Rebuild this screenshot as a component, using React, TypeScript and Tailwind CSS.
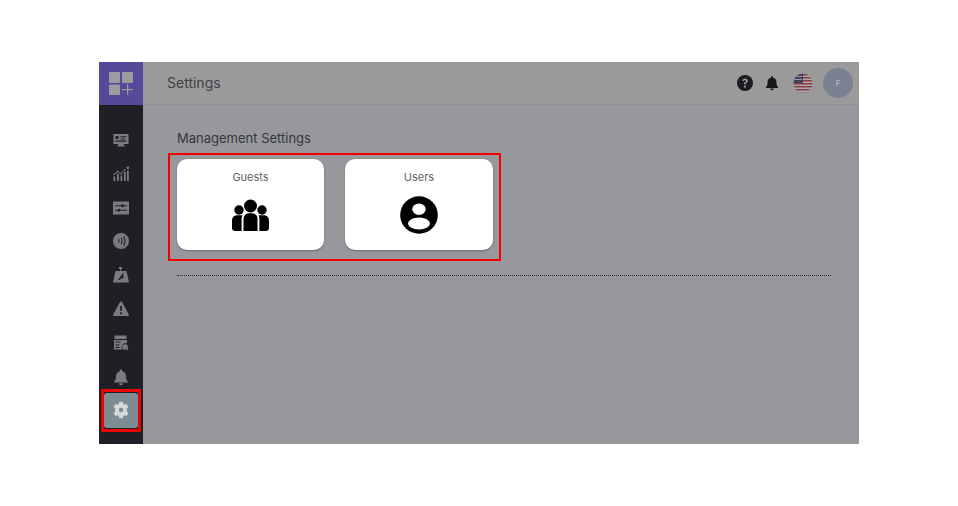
import React from "react";

const Ic = ({ children, w = 18, h = 18 }: { children: React.ReactNode; w?: number; h?: number }) => (
  <svg width={w} height={h} viewBox="0 0 18 18" fill="currentColor">{children}</svg>
);

const BellPath = () => (
  <path d="M9 1.500c-.7 0-1.200.5-1.200 1.200v.5C5.400 3.800 4 5.800 4 8.200c0 3.400-.8 4.300-1.800 5.400-.3.400-.1.900.4.900h12.800c.5 0 .7-.5.400-.9-1-1.100-1.800-2-1.800-5.400 0-2.400-1.400-4.400-3.800-5v-.5c0-.7-.5-1.200-1.200-1.200zM7 15.300a2 2 0 0 0 4 0z" />
);

const GearPath = () => (
  <path fillRule="evenodd" d="M7.200.8h3.600l.4 2.200c.5.200.9.400 1.300.7l2.100-.8 1.800 3.100-1.700 1.400a6 6 0 0 1 0 3.200l1.700 1.400-1.800 3.100-2.100-.8c-.4.300-.8.500-1.300.7l-.4 2.200H7.200l-.4-2.200c-.5-.2-.9-.4-1.300-.7l-2.100.8-1.800-3.100 1.700-1.400a6 6 0 0 1 0-3.200L1.600 6l1.800-3.100 2.100.8c.4-.3.8-.5 1.300-.7zM9 6.800a2.200 2.200 0 1 0 0 4.400 2.200 2.200 0 0 0 0-4.400z" />
);

const navIcons: React.ReactNode[] = [
  <Ic key="a">
    <path fillRule="evenodd" d="M1.500 3h15v10h-5l1.500 2.500H5L6.500 13h-5zM3.500 5v3h3V5zm5 .3v1h6v-1zm0 2.200v1h4.500v-1zM3.500 9.500v1.200h11V9.500z" />
  </Ic>,
  <Ic key="b">
    <path d="M1.500 16v-4.500h1.800V16zM5 16V8.500h1.800V16zM8.500 16v-5.500h1.800V16zM12 16V7h1.800v9zM15 16V5.500h1.800V16z" />
    <path d="M1 9.800 5.600 5.500l3.500 3 3.500-4.500 1.400.8-.5.800-.7-.4-3.500 4.500-3.600-3-4 3.800z" />
    <circle cx="15.800" cy="2.800" r="1.400" />
  </Ic>,
  <Ic key="c">
    <path fillRule="evenodd" d="M1 2.500h16v13H1zM3 6.200v1h6.200a1.500 1.500 0 0 0 2.800 0H15v-1h-3a1.500 1.500 0 0 0-2.800 0zM3 10.800v1h2.500a1.500 1.500 0 0 0 2.800 0H15v-1H8.300a1.500 1.500 0 0 0-2.800 0z" />
  </Ic>,
  <Ic key="d">
    <path fillRule="evenodd" d="M9 1a8 8 0 1 1 0 16A8 8 0 0 1 9 1zM6.200 7.500c.5 1 .5 2 0 3l.9.500c.6-1.300.6-2.700 0-4zM8.800 6c.9 2 .9 4 0 6l1 .5c1-2.300 1-4.700 0-7zM11.300 4.500c1.400 3 1.400 6 0 9l1 .5c1.500-3.300 1.500-6.700 0-10z" />
  </Ic>,
  <Ic key="e">
    <path fillRule="evenodd" d="M7 1h3v2H9v2h5.500L17 16.500H1L3.500 5H8V3H7zM11 7 6 14h1.800l1.400-2 1 1.200L12 10l-1.200-1.200L11.800 7.500z" />
  </Ic>,
  <Ic key="f">
    <path fillRule="evenodd" d="M9 1.500c.5 0 1 .3 1.200.7l6.500 12c.5.900-.1 1.900-1.100 1.900H2.400c-1 0-1.600-1-1.100-1.900l6.500-12c.2-.4.700-.7 1.200-.7zM8 6l.3 5h1.400L10 6zm1 6.200a1.100 1.100 0 1 0 0 2.200 1.100 1.100 0 0 0 0-2.200z" />
  </Ic>,
  <Ic key="g">
    <path fillRule="evenodd" d="M2.500 1.500h12V5h-12zM2 6h13v3.400a4 4 0 0 0-4.700 6.100H2zM3.500 7.500v1h5v-1zm0 3v1h4v-1zm0 2.500v1h4v-1z" />
    <circle cx="13" cy="13" r="2.800" />
    <path d="m14.500 15 1 1.500 1-.7-1-1.500z" />
  </Ic>,
  <Ic key="h"><BellPath /></Ic>,
];

const UsersIcon = () => (
  <svg width="37" height="33" viewBox="0 0 37 33" fill="#000">
    <circle cx="18.500" cy="7" r="6.500" />
    <circle cx="7" cy="11" r="4.700" />
    <circle cx="30" cy="11" r="4.700" />
    <path d="M11.500 32V20c0-3.500 2.500-5.800 5.500-5.800h3c3 0 5.500 2.300 5.500 5.800v12z" />
    <path d="M9.600 32H3c-1.600 0-3-1.200-3-3v-7.500c0-3.200 2.300-5.300 5-5.300h5.500C9.900 17.300 9.600 18.700 9.600 20zM27.400 32H34c1.600 0 3-1.200 3-3v-7.500c0-3.200-2.300-5.300-5-5.300h-5.500c.6 1.100.9 2.500.9 3.800z" />
  </svg>
);

const AccountIcon = () => (
  <svg width="38" height="38" viewBox="0 0 38 38">
    <circle cx="19" cy="19" r="18.800" fill="#000" />
    <ellipse cx="19" cy="13.300" rx="6.700" ry="5.700" fill="#fff" />
    <ellipse cx="19" cy="27.500" rx="11" ry="6" fill="#fff" />
  </svg>
);

const Flag = () => (
  <svg width="20" height="20" viewBox="0 0 20 20">
    <defs>
      <clipPath id="flagclip"><circle cx="10" cy="10" r="9.500" /></clipPath>
    </defs>
    <g clipPath="url(#flagclip)">
      <rect width="20" height="20" fill="#a9a9ad" />
      {[1, 4, 7, 10, 13, 16, 19].map((y) => (
        <rect key={y} x="0" y={y} width="20" height="1.500" fill="#8c3a44" />
      ))}
      <rect width="10" height="10" fill="#3f4360" />
      <rect x="1" y="3" width="8" height="1" fill="#9a9aa5" />
      <rect x="1" y="6" width="8" height="1" fill="#9a9aa5" />
    </g>
  </svg>
);

const Card = ({ title, width, children }: { title: string; width: string; children: React.ReactNode }) => (
  <div className={`${width} flex h-[91px] flex-col items-center rounded-[10px] bg-white pt-[10px] shadow-[0_1px_2px_rgba(0,0,0,0.3)]`}>
    <span className="text-[11px] leading-[16px] text-[#5f6064]">{title}</span>
    <div className="mt-[10px] flex h-[40px] items-center justify-center">{children}</div>
  </div>
);

export default function App() {
  return (
    <div
      className="h-[506px] w-[958px] bg-white pl-[99px] pt-[62px]"
      style={{ fontFamily: '"Inter", "Open Sans", sans-serif' }}
    >
      <div className="flex h-[382px] w-[760px] bg-[#97989c]">
        <aside className="flex w-[44px] shrink-0 flex-col items-center bg-[#1f2026]">
          <div className="flex h-[43px] w-full items-center justify-center bg-[#57499a]">
            <svg width="24" height="23" viewBox="0 0 24 23" fill="#9c9ca0">
              <rect x="0" y="0" width="11" height="11" rx="1" />
              <rect x="13" y="0" width="11" height="11" rx="1" />
              <rect x="0" y="12.500" width="11" height="10.500" rx="1" />
              <rect x="13" y="17" width="11" height="1.200" />
              <rect x="18" y="12" width="1.200" height="11" />
            </svg>
          </div>
          <div className="mt-[26px] flex flex-col items-center gap-[15.800px] text-[#7b7b7d]">
            {navIcons}
          </div>
          <div className="mt-[3px] border-[3px] border-[#f00000] py-[1px]">
            <div className="flex h-[35px] w-[34px] items-center justify-center rounded-[3px] bg-[#7b8d92] text-[#d5d8d9]">
              <Ic><GearPath /></Ic>
            </div>
          </div>
        </aside>
        <main className="flex min-w-0 flex-1 flex-col">
          <header className="flex h-[43px] items-center justify-between border-b border-[#8d8e91] bg-[#9a9a9b] pb-[2px] pl-[24px] pr-[6px]">
            <span className="text-[14px] text-[#3f4045]">Settings</span>
            <div className="flex items-center pt-[2px] text-[#17181c]">
              <svg width="16" height="16" viewBox="0 0 16 16">
                <circle cx="8" cy="8" r="8" fill="#1b1c20" />
                <path d="M5.300 6.100C5.400 4.500 6.500 3.500 8.100 3.500c1.600 0 2.700 1 2.700 2.300 0 1-.6 1.600-1.300 2.100-.6.400-.8.700-.8 1.300v.3H7.100v-.5c0-1 .4-1.500 1.100-2 .5-.4.800-.7.800-1.100 0-.5-.4-.8-.9-.8-.6 0-1 .4-1.100 1z" fill="#9a9a9b" />
                <circle cx="7.900" cy="11.700" r="1.100" fill="#9a9a9b" />
              </svg>
              <div className="ml-[11px]">
                <Ic w={16} h={16}><BellPath /></Ic>
              </div>
              <div className="ml-[13px]"><Flag /></div>
              <div className="ml-[10px] flex h-[30px] w-[30px] items-center justify-center rounded-full bg-[#7b8193] text-[8px] font-bold text-[#a9adb8]">
                F
              </div>
            </div>
          </header>
          <div className="flex flex-col pl-[25px] pr-[28px] pt-[24px]">
            <h2 className="ml-[9px] text-[13px] leading-[18px] text-[#36373b]">Management Settings</h2>
            <div className="mt-[6px] flex h-[108px] w-[333px] gap-[21px] border-2 border-[#f00000] pl-[7px] pt-[4px]">
              <Card title="Guests" width="w-[147px]"><UsersIcon /></Card>
              <Card title="Users" width="w-[148px]"><AccountIcon /></Card>
            </div>
            <div className="ml-[9px] mt-[14px] border-t border-dotted border-[#2c2d30]" />
          </div>
        </main>
      </div>
    </div>
  );
}
